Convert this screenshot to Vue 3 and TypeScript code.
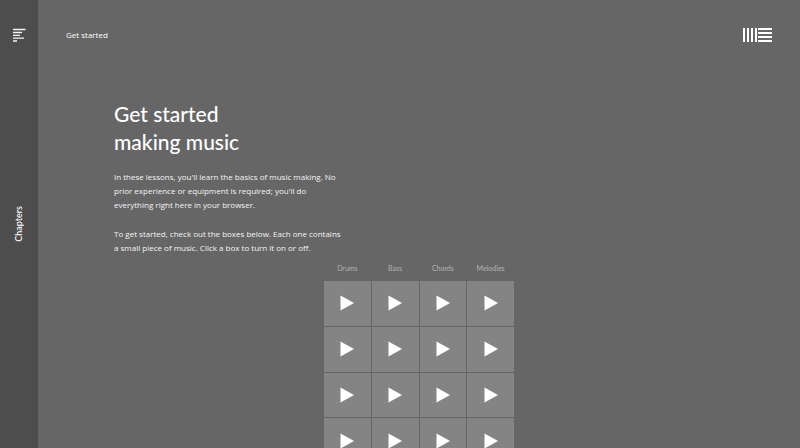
<script setup lang="ts">
import { ref } from 'vue'

const tracks: string[] = ['Drums', 'Bass', 'Chords', 'Melodies']
const rows = 4
const active = ref<Record<string, number>>({})

function toggle(track: string, row: number): void {
  active.value[track] = active.value[track] === row ? 0 : row
}
</script>

<template>
  <div class="page">
    <aside class="sidebar">
      <button class="menu" type="button" aria-label="Open chapters">
        <svg width="14" height="14" viewBox="0 0 14 14" aria-hidden="true">
          <path
            d="M1 1.5h12.5M1 4.5h9M1 7.3h7M1 10.2h11M1 13h4"
            stroke="#f4f4f4"
            stroke-width="1.3"
          />
        </svg>
      </button>
      <a class="chapters" href="#chapters">Chapters</a>
    </aside>
    <main class="main">
      <header class="bar">
        <a class="crumb" href="#start">Get started</a>
        <a class="logo" href="#home" aria-label="Home">
          <svg width="29" height="14" viewBox="0 0 29 14" aria-hidden="true">
            <path d="M1 0v14M5 0v14M9 0v14M13 0v14" stroke="#fff" stroke-width="2" />
            <path d="M15 1h14M15 5h14M15 9h14M15 13h14" stroke="#fff" stroke-width="2" />
          </svg>
        </a>
      </header>
      <section class="intro">
        <h1>Get started<br />making music</h1>
        <p>
          In these lessons, you'll learn the basics of music making. No<br />
          prior experience or equipment is required; you'll do<br />
          everything right here in your browser.
        </p>
        <p>
          To get started, check out the boxes below. Each one contains<br />
          a small piece of music. Click a box to turn it on or off.
        </p>
      </section>
      <section class="player">
        <div class="labels">
          <span v-for="track in tracks" :key="track">{{ track }}</span>
        </div>
        <div class="grid">
          <template v-for="row in rows" :key="row">
            <button
              v-for="track in tracks"
              :key="track"
              class="cell"
              :class="{ on: active[track] === row }"
              type="button"
              :aria-label="`${track} ${row}`"
              @click="toggle(track, row)"
            >
              <svg width="14" height="16" viewBox="0 0 14 16" aria-hidden="true">
                <path d="M0.5 0.5L14 8L0.5 15.5z" fill="#fff" />
              </svg>
            </button>
          </template>
        </div>
      </section>
    </main>
  </div>
</template>

<style>
body {
  background: #666;
}
</style>

<style scoped>
.page {
  display: flex;
  height: 100vh;
  overflow: hidden;
  background: #666;
  color: #fff;
  font-family: Lato, sans-serif;
}
a {
  color: inherit;
  text-decoration: none;
}
button {
  padding: 0;
  border: 0;
  background: none;
  cursor: pointer;
}
svg {
  display: block;
}
.sidebar {
  display: grid;
  flex: 0 0 38px;
  grid-template-rows: 1fr auto 1fr;
  justify-items: center;
  background: #4d4d4d;
}
.menu {
  align-self: start;
  padding-top: 28px;
}
.chapters {
  transform: rotate(180deg);
  writing-mode: vertical-rl;
  font-size: 9px;
  line-height: 14px;
  font-weight: 500;
}
.main {
  flex: 1;
  min-width: 0;
}
.bar {
  display: flex;
  align-items: center;
  justify-content: space-between;
  padding: 28px 28px 0;
}
.crumb,
p {
  font-family: "Open Sans", sans-serif;
  font-size: 8px;
  line-height: 14px;
}
.intro {
  padding: 58px 76px 0;
}
h1 {
  margin: 0 0 14px;
  font-size: 21px;
  line-height: 28px;
  font-weight: 500;
}
p {
  margin: 0 0 15px;
  color: #f4f4f4;
}
.intro p:last-child {
  margin-bottom: 8px;
}
.player {
  width: 190px;
  margin: 0 auto;
}
.labels,
.grid {
  display: grid;
  grid-template-columns: repeat(4, 1fr);
  gap: 1px;
}
.labels {
  margin-bottom: 8px;
  color: #b3b3b3;
  font-size: 7px;
  line-height: 10px;
  text-align: center;
}
.grid {
  height: 182px;
  grid-template-rows: repeat(4, 1fr);
}
.cell {
  display: flex;
  align-items: center;
  justify-content: center;
  background: #848484;
}
.cell.on {
  background: #a8a8a8;
}
</style>
